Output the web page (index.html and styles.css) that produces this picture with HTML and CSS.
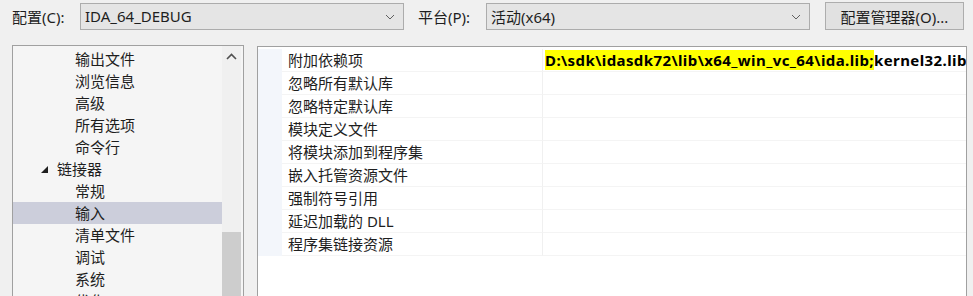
FILE: index.html
```html
<!DOCTYPE html>
<html lang="zh-CN">
<head>
  <meta charset="UTF-8">
  <title>属性页 - 链接器 输入</title>
  <link rel="stylesheet" href="styles.css">
</head>
<body>
<div class="toolbar">
  <span class="label label-config">配置(C):</span>
  <div class="combo combo-config">
    <span>IDA_64_DEBUG</span>
    <svg class="chevron" width="10" height="6" viewBox="0 0 10 6"><path d="M1 1l4 4 4-4" fill="none" stroke="#606060" stroke-width="1"/></svg>
  </div>
  <span class="label label-platform">平台(P):</span>
  <div class="combo combo-platform">
    <span>活动(x64)</span>
    <svg class="chevron" width="10" height="6" viewBox="0 0 10 6"><path d="M1 1l4 4 4-4" fill="none" stroke="#606060" stroke-width="1"/></svg>
  </div>
  <button class="manager" type="button">配置管理器(O)...</button>
</div>

<div class="panes">
  <div class="tree">
    <ul class="tree-list">
      <li class="node child">输出文件</li>
      <li class="node child">浏览信息</li>
      <li class="node child">高级</li>
      <li class="node child">所有选项</li>
      <li class="node child">命令行</li>
      <li class="node parent"><span class="arrow"></span>链接器</li>
      <li class="node child">常规</li>
      <li class="node child selected">输入</li>
      <li class="node child">清单文件</li>
      <li class="node child">调试</li>
      <li class="node child">系统</li>
      <li class="node child">优化</li>
    </ul>
    <div class="scrollbar">
      <svg class="scroll-up" width="11" height="7" viewBox="0 0 11 7"><path d="M1 6l4.5-4.5L10 6" fill="none" stroke="#505050" stroke-width="1.6"/></svg>
      <div class="thumb"></div>
    </div>
  </div>

  <div class="grid">
    <div class="row">
      <div class="gutter"></div>
      <div class="name">附加依赖项</div>
      <div class="value"><span class="mark">D:\sdk\idasdk72\lib\x64_win_vc_64\ida.lib;</span>kernel32.lib;user32.lib;gdi32.lib</div>
    </div>
    <div class="row">
      <div class="gutter"></div>
      <div class="name">忽略所有默认库</div>
      <div class="value"></div>
    </div>
    <div class="row">
      <div class="gutter"></div>
      <div class="name">忽略特定默认库</div>
      <div class="value"></div>
    </div>
    <div class="row">
      <div class="gutter"></div>
      <div class="name">模块定义文件</div>
      <div class="value"></div>
    </div>
    <div class="row">
      <div class="gutter"></div>
      <div class="name">将模块添加到程序集</div>
      <div class="value"></div>
    </div>
    <div class="row">
      <div class="gutter"></div>
      <div class="name">嵌入托管资源文件</div>
      <div class="value"></div>
    </div>
    <div class="row">
      <div class="gutter"></div>
      <div class="name">强制符号引用</div>
      <div class="value"></div>
    </div>
    <div class="row">
      <div class="gutter"></div>
      <div class="name">延迟加载的 DLL</div>
      <div class="value"></div>
    </div>
    <div class="row">
      <div class="gutter"></div>
      <div class="name">程序集链接资源</div>
      <div class="value"></div>
    </div>
  </div>
</div>
</body>
</html>
```

FILE: styles.css
```css
body {
  margin: 0;
  height: 296px;
  overflow: hidden;
  background: #f0f0f0;
  font-family: "Noto Sans", "Noto Sans CJK SC", sans-serif;
  font-size: 15px;
  color: #1e1e1e;
}

.toolbar {
  display: flex;
  align-items: center;
  height: 32px;
  padding: 0 0 0 12px;
}

.label {
  white-space: nowrap;
}

.label-config {
  width: 68px;
}

.label-platform {
  width: 68px;
  margin-left: 14px;
}

.combo {
  display: flex;
  align-items: center;
  justify-content: space-between;
  box-sizing: border-box;
  width: 324px;
  height: 27px;
  padding: 0 8px 0 4px;
  border: 1px solid #acacac;
  background: #e5e5e5;
}

.chevron {
  margin-top: 1px;
}

.manager {
  box-sizing: border-box;
  width: 139px;
  height: 28px;
  margin-left: 15px;
  border: 1px solid #adadad;
  background: #e1e1e1;
  font: inherit;
  color: #1e1e1e;
  padding: 0;
}

.panes {
  display: flex;
  gap: 13px;
  margin-top: 13px;
  padding-left: 12px;
}

.tree {
  display: flex;
  flex-shrink: 0;
  box-sizing: border-box;
  width: 232px;
  height: 251px;
  border: 1px solid #a0a0a0;
  border-bottom: none;
  background: #f5f5f5;
}

.tree-list {
  flex: 1;
  list-style: none;
  margin: 0;
  padding: 2px 0 0;
  overflow: hidden;
}

.node {
  height: 22px;
  line-height: 22px;
  white-space: nowrap;
}

.child {
  padding-left: 62px;
}

.parent {
  display: flex;
  align-items: center;
  padding-left: 28px;
}

.arrow {
  width: 0;
  height: 0;
  margin-right: 9px;
  border-left: 7px solid transparent;
  border-bottom: 7px solid #1e1e1e;
}

.selected {
  background: #cccedb;
}

.scrollbar {
  display: flex;
  flex-direction: column;
  align-items: center;
  width: 19px;
  margin-right: 2px;
  background: #f0f0f0;
}

.scroll-up {
  margin-top: 7px;
}

.thumb {
  width: 19px;
  margin-top: 172px;
  flex: 1;
  background: #cdcdcd;
}

.grid {
  flex-shrink: 0;
  box-sizing: border-box;
  width: 710px;
  height: 250px;
  margin-top: 1px;
  border: 1px solid #a0a0a0;
  border-bottom: none;
  background: #fff;
  padding-top: 2px;
  overflow: hidden;
}

.row {
  display: flex;
  height: 23px;
}

.gutter {
  flex-shrink: 0;
  width: 24px;
  background: #f3f6fb;
}

.name {
  flex-shrink: 0;
  width: 261px;
  box-sizing: border-box;
  padding-left: 6px;
  line-height: 22px;
  border-bottom: 1px solid #f4f4f4;
  border-right: 1px solid #f0f0f0;
  white-space: nowrap;
}

.value {
  flex: 1;
  min-width: 0;
  padding-left: 2px;
  line-height: 22px;
  border-bottom: 1px solid #f4f4f4;
  font-weight: bold;
  letter-spacing: 0.4px;
  white-space: nowrap;
  overflow: hidden;
  color: #000;
}

.mark {
  background: #ffff00;
}
```
